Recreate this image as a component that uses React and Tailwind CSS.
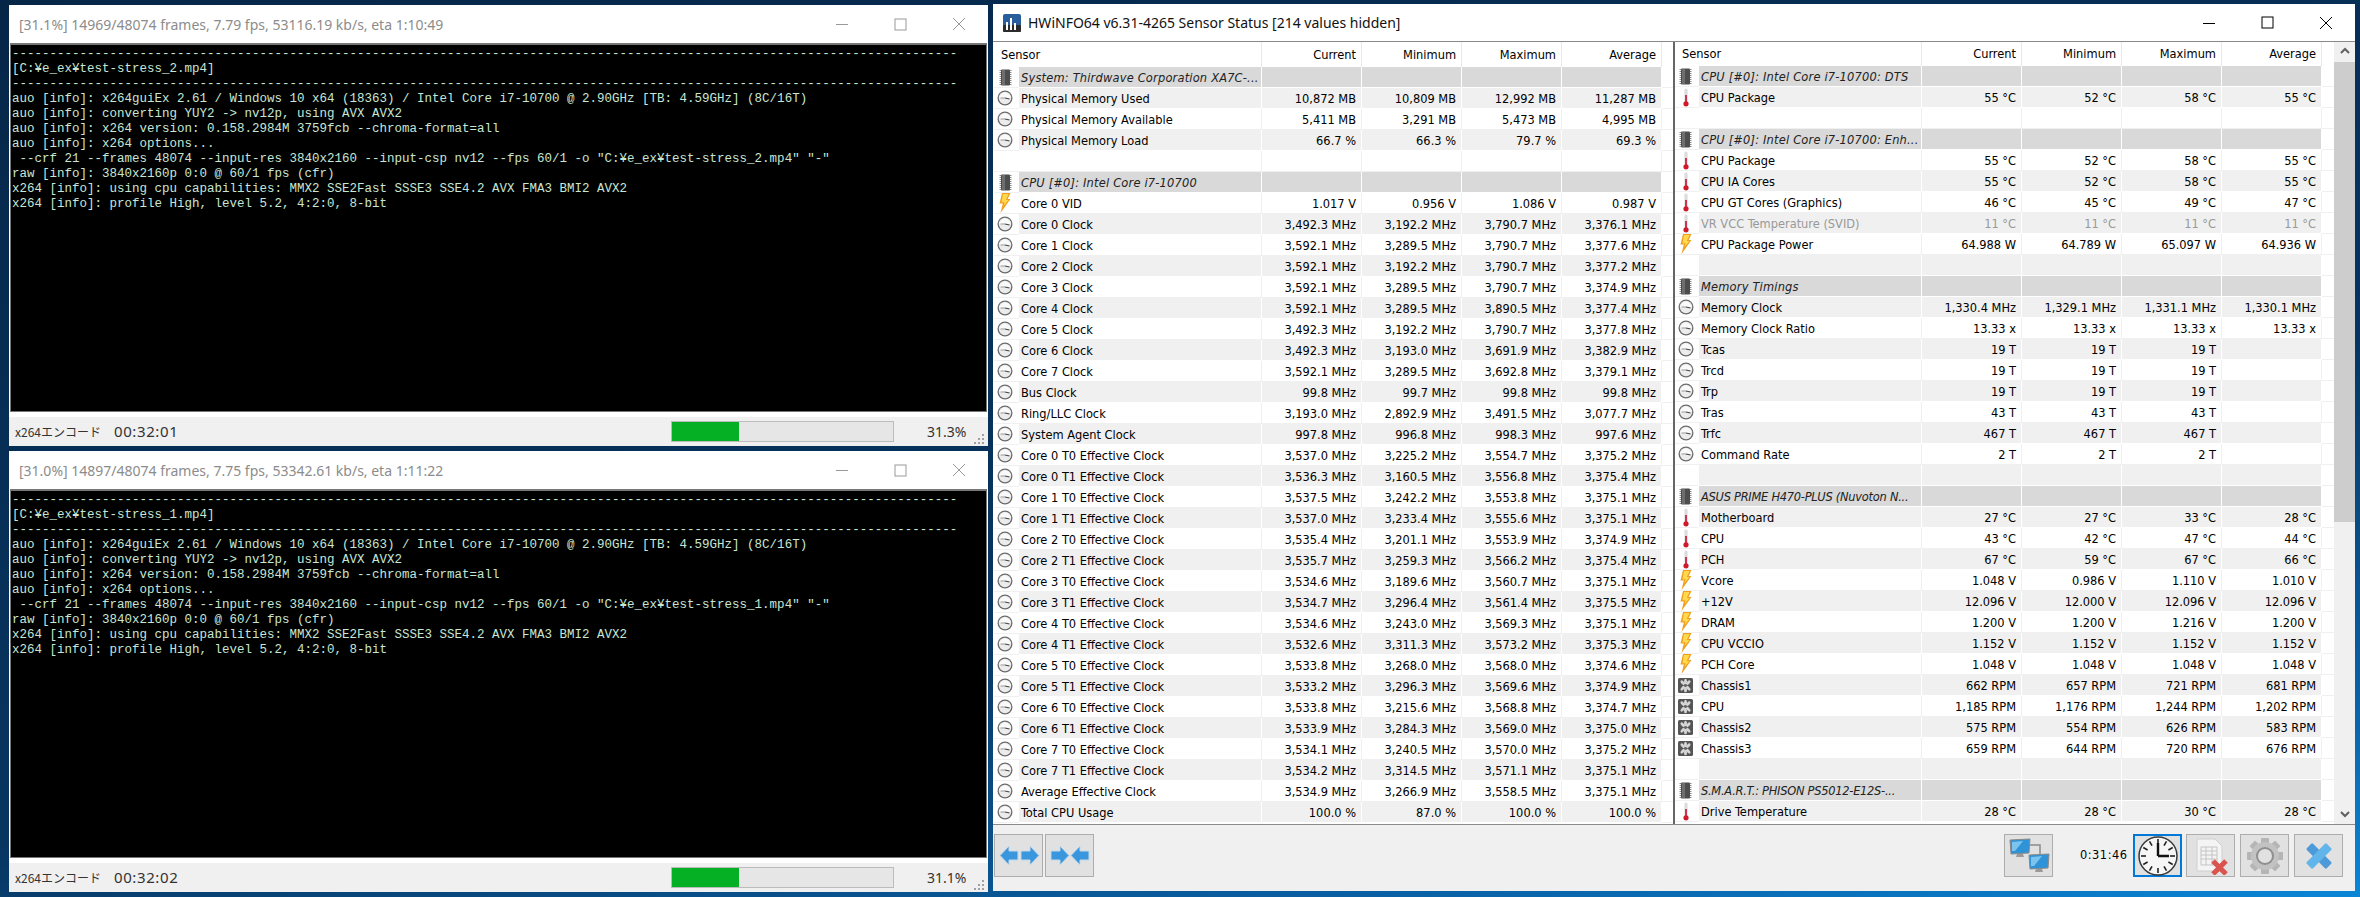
import React from "react";

const Chip = () => (
  <svg width="13" height="17" viewBox="0 0 13 17">
    <rect x="2" y="0.5" width="9" height="16" rx="1" fill="#4d4d4d" />
    <rect x="3" y="1" width="3" height="15" fill="#6e6e6e" />
    {[1, 3, 5, 7, 9, 11, 13, 15].map((y) => (
      <g key={y}>
        <rect x="0.5" y={y} width="1.5" height="1" fill="#8a8a8a" />
        <rect x="11" y={y} width="1.5" height="1" fill="#8a8a8a" />
      </g>
    ))}
  </svg>
);
const Gauge = () => (
  <svg width="16" height="16" viewBox="0 0 16 16">
    <circle cx="8" cy="8" r="7.5" fill="#6b6b6b" />
    <circle cx="8" cy="8" r="6.2" fill="#ececec" />
    <path d="M2.6 8 A5.4 5.4 0 0 1 13.4 8" fill="#fafafa" />
    <path d="M8 8 L12.5 9" stroke="#444" strokeWidth="1.2" />
    <path d="M3.5 8 L8 8" stroke="#999" strokeWidth="1" />
  </svg>
);
const Thermo = () => (
  <svg width="8" height="19" viewBox="0 0 8 19">
    <rect x="2.4" y="0.5" width="3.2" height="15" rx="1.5" fill="#dcdcdc" />
    <rect x="3.2" y="7" width="1.6" height="9" fill="#c8102e" />
    <circle cx="4" cy="15.8" r="2.6" fill="#cf1a2c" />
  </svg>
);
const Bolt = () => (
  <svg width="12" height="20" viewBox="0 0 12 20">
    <path d="M3 0 L11.5 0 L8.6 6 L11.5 6 L1.5 20 L3.8 10.5 L0.5 10.5 Z" fill="#f0a020" />
    <path d="M4 1 L9.5 1 L6.8 7 L9.6 7 L4.5 13 L5.6 9.2 L2.5 9.2 Z" fill="#ffd84d" />
  </svg>
);
const Fan = () => (
  <svg width="15" height="15" viewBox="0 0 15 15">
    <rect width="15" height="15" rx="1.5" fill="#555" />
    {[45, 135, 225, 315, 0, 180].map((a) => (
      <ellipse key={a} cx="7.5" cy="3.6" rx="1.5" ry="2.9" fill="#d6d6d6" transform={`rotate(${a} 7.5 7.5)`} />
    ))}
    <circle cx="7.5" cy="7.5" r="1.4" fill="#666" />
  </svg>
);

const icons = { g: Chip, c: Gauge, t: Thermo, b: Bolt, f: Fan };

const mhz = (a, b, c, d) => [a, b, c, d].map((v) => v + " MHz");

const leftRows = [
  ["g", "System: Thirdwave Corporation XA7C-..."],
  ["c", "Physical Memory Used", "10,872 MB", "10,809 MB", "12,992 MB", "11,287 MB"],
  ["c", "Physical Memory Available", "5,411 MB", "3,291 MB", "5,473 MB", "4,995 MB"],
  ["c", "Physical Memory Load", "66.7 %", "66.3 %", "79.7 %", "69.3 %"],
  [""],
  ["g", "CPU [#0]: Intel Core i7-10700"],
  ["b", "Core 0 VID", "1.017 V", "0.956 V", "1.086 V", "0.987 V"],
  ["c", "Core 0 Clock", ...mhz("3,492.3", "3,192.2", "3,790.7", "3,376.1")],
  ["c", "Core 1 Clock", ...mhz("3,592.1", "3,289.5", "3,790.7", "3,377.6")],
  ["c", "Core 2 Clock", ...mhz("3,592.1", "3,192.2", "3,790.7", "3,377.2")],
  ["c", "Core 3 Clock", ...mhz("3,592.1", "3,289.5", "3,790.7", "3,374.9")],
  ["c", "Core 4 Clock", ...mhz("3,592.1", "3,289.5", "3,890.5", "3,377.4")],
  ["c", "Core 5 Clock", ...mhz("3,492.3", "3,192.2", "3,790.7", "3,377.8")],
  ["c", "Core 6 Clock", ...mhz("3,492.3", "3,193.0", "3,691.9", "3,382.9")],
  ["c", "Core 7 Clock", ...mhz("3,592.1", "3,289.5", "3,692.8", "3,379.1")],
  ["c", "Bus Clock", ...mhz("99.8", "99.7", "99.8", "99.8")],
  ["c", "Ring/LLC Clock", ...mhz("3,193.0", "2,892.9", "3,491.5", "3,077.7")],
  ["c", "System Agent Clock", ...mhz("997.8", "996.8", "998.3", "997.6")],
  ["c", "Core 0 T0 Effective Clock", ...mhz("3,537.0", "3,225.2", "3,554.7", "3,375.2")],
  ["c", "Core 0 T1 Effective Clock", ...mhz("3,536.3", "3,160.5", "3,556.8", "3,375.4")],
  ["c", "Core 1 T0 Effective Clock", ...mhz("3,537.5", "3,242.2", "3,553.8", "3,375.1")],
  ["c", "Core 1 T1 Effective Clock", ...mhz("3,537.0", "3,233.4", "3,555.6", "3,375.1")],
  ["c", "Core 2 T0 Effective Clock", ...mhz("3,535.4", "3,201.1", "3,553.9", "3,374.9")],
  ["c", "Core 2 T1 Effective Clock", ...mhz("3,535.7", "3,259.3", "3,566.2", "3,375.4")],
  ["c", "Core 3 T0 Effective Clock", ...mhz("3,534.6", "3,189.6", "3,560.7", "3,375.1")],
  ["c", "Core 3 T1 Effective Clock", ...mhz("3,534.7", "3,296.4", "3,561.4", "3,375.5")],
  ["c", "Core 4 T0 Effective Clock", ...mhz("3,534.6", "3,243.0", "3,569.3", "3,375.1")],
  ["c", "Core 4 T1 Effective Clock", ...mhz("3,532.6", "3,311.3", "3,573.2", "3,375.3")],
  ["c", "Core 5 T0 Effective Clock", ...mhz("3,533.8", "3,268.0", "3,568.0", "3,374.6")],
  ["c", "Core 5 T1 Effective Clock", ...mhz("3,533.2", "3,296.3", "3,569.6", "3,374.9")],
  ["c", "Core 6 T0 Effective Clock", ...mhz("3,533.8", "3,215.6", "3,568.8", "3,374.7")],
  ["c", "Core 6 T1 Effective Clock", ...mhz("3,533.9", "3,284.3", "3,569.0", "3,375.0")],
  ["c", "Core 7 T0 Effective Clock", ...mhz("3,534.1", "3,240.5", "3,570.0", "3,375.2")],
  ["c", "Core 7 T1 Effective Clock", ...mhz("3,534.2", "3,314.5", "3,571.1", "3,375.1")],
  ["c", "Average Effective Clock", ...mhz("3,534.9", "3,266.9", "3,558.5", "3,375.1")],
  ["c", "Total CPU Usage", "100.0 %", "87.0 %", "100.0 %", "100.0 %"],
];

const rightRows = [
  ["g", "CPU [#0]: Intel Core i7-10700: DTS"],
  ["t", "CPU Package", "55 °C", "52 °C", "58 °C", "55 °C"],
  [""],
  ["g", "CPU [#0]: Intel Core i7-10700: Enh..."],
  ["t", "CPU Package", "55 °C", "52 °C", "58 °C", "55 °C"],
  ["t", "CPU IA Cores", "55 °C", "52 °C", "58 °C", "55 °C"],
  ["t", "CPU GT Cores (Graphics)", "46 °C", "45 °C", "49 °C", "47 °C"],
  ["t", "VR VCC Temperature (SVID)", "11 °C", "11 °C", "11 °C", "11 °C", true],
  ["b", "CPU Package Power", "64.988 W", "64.789 W", "65.097 W", "64.936 W"],
  [""],
  ["g", "Memory Timings"],
  ["c", "Memory Clock", "1,330.4 MHz", "1,329.1 MHz", "1,331.1 MHz", "1,330.1 MHz"],
  ["c", "Memory Clock Ratio", "13.33 x", "13.33 x", "13.33 x", "13.33 x"],
  ["c", "Tcas", "19 T", "19 T", "19 T", ""],
  ["c", "Trcd", "19 T", "19 T", "19 T", ""],
  ["c", "Trp", "19 T", "19 T", "19 T", ""],
  ["c", "Tras", "43 T", "43 T", "43 T", ""],
  ["c", "Trfc", "467 T", "467 T", "467 T", ""],
  ["c", "Command Rate", "2 T", "2 T", "2 T", ""],
  [""],
  ["g", "ASUS PRIME H470-PLUS (Nuvoton N..."],
  ["t", "Motherboard", "27 °C", "27 °C", "33 °C", "28 °C"],
  ["t", "CPU", "43 °C", "42 °C", "47 °C", "44 °C"],
  ["t", "PCH", "67 °C", "59 °C", "67 °C", "66 °C"],
  ["b", "Vcore", "1.048 V", "0.986 V", "1.110 V", "1.010 V"],
  ["b", "+12V", "12.096 V", "12.000 V", "12.096 V", "12.096 V"],
  ["b", "DRAM", "1.200 V", "1.200 V", "1.216 V", "1.200 V"],
  ["b", "CPU VCCIO", "1.152 V", "1.152 V", "1.152 V", "1.152 V"],
  ["b", "PCH Core", "1.048 V", "1.048 V", "1.048 V", "1.048 V"],
  ["f", "Chassis1", "662 RPM", "657 RPM", "721 RPM", "681 RPM"],
  ["f", "CPU", "1,185 RPM", "1,176 RPM", "1,244 RPM", "1,202 RPM"],
  ["f", "Chassis2", "575 RPM", "554 RPM", "626 RPM", "583 RPM"],
  ["f", "Chassis3", "659 RPM", "644 RPM", "720 RPM", "676 RPM"],
  [""],
  ["g", "S.M.A.R.T.: PHISON PS5012-E12S-..."],
  ["t", "Drive Temperature", "28 °C", "28 °C", "30 °C", "28 °C"],
];

function SensorTable({ rows, headerH, iconW, nameW, headW, className }) {
  const heads = ["Current", "Minimum", "Maximum", "Average"];
  return (
    <div className={"flex flex-col overflow-hidden " + className}>
      <div className={"flex shrink-0 " + headerH}>
        <div className={"border-r border-[#e8e8e8] pl-[7px] flex items-center " + headW}>Sensor</div>
        {heads.map((h) => (
          <div key={h} className="w-[100px] border-r border-[#e8e8e8] pr-[5px] flex items-center justify-end">{h}</div>
        ))}
      </div>
      {rows.map((r, i) => {
        const group = r[0] === "g";
        const caps = group && (r[1].startsWith("ASUS") || r[1].startsWith("S.M.A.R.T."));
        const alt = i % 2 === 1;
        const bg = group ? "bg-[#d9d9d9] border-white" : alt ? "bg-[#f0f0f0] border-white" : "bg-white border-[#f0f0f0]";
        const Ico = icons[r[0]];
        const tone = r[6] ? "text-[#999999]" : "text-black";
        const nameStyle = caps ? " italic text-[#222222] tracking-[-0.25px]" : group ? " italic text-[#222222] tracking-[0.2px]" : "";
        return (
          <div key={i} className={"flex h-[21px] shrink-0 leading-[21px] " + tone}>
            <div className={"flex items-center justify-center border-b border-[#f0f0f0] pr-[3px] " + iconW}>
              {Ico ? <Ico /> : null}
            </div>
            <div className={"border-r border-b pl-[2px] whitespace-nowrap overflow-hidden " + nameW + " " + bg + nameStyle}>
              {r[1]}
            </div>
            {[2, 3, 4, 5].map((k) => (
              <div key={k} className={"w-[100px] border-r border-b pr-[5px] text-right whitespace-nowrap " + bg}>{r[k] || ""}</div>
            ))}
            <div className="flex-1 border-b border-[#f0f0f0]" />
          </div>
        );
      })}
    </div>
  );
}

function WinButtons({ color }) {
  return (
    <div className="flex shrink-0" style={{ color }}>
      <div className="w-[59px] flex items-center justify-center">
        <svg width="14" height="12" viewBox="0 0 14 12"><path d="M1 6.5H13" stroke="currentColor" strokeWidth="1" /></svg>
      </div>
      <div className="w-[59px] flex items-center justify-center">
        <svg width="13" height="13" viewBox="0 0 13 13"><rect x="1" y="1" width="11" height="11" fill="none" stroke="currentColor" strokeWidth="1" /></svg>
      </div>
      <div className="w-[58px] flex items-center justify-center">
        <svg width="14" height="14" viewBox="0 0 14 14"><path d="M1 1L13 13M13 1L1 13" stroke="currentColor" strokeWidth="1" /></svg>
      </div>
    </div>
  );
}

function Grip() {
  return (
    <svg width="11" height="10" viewBox="0 0 11 10" className="shrink-0">
      <g fill="#a0a0a0">
        <rect x="8" y="0" width="2" height="2" />
        <rect x="4" y="4" width="2" height="2" />
        <rect x="8" y="4" width="2" height="2" />
        <rect x="0" y="8" width="2" height="2" />
        <rect x="4" y="8" width="2" height="2" />
        <rect x="8" y="8" width="2" height="2" />
      </g>
    </svg>
  );
}

function Console({ title, file, time, pct, className }) {
  const dash = "-".repeat(126);
  const lines = [
    dash,
    `[C:¥e_ex¥test-stress_${file}.mp4]`,
    dash,
    "auo [info]: x264guiEx 2.61 / Windows 10 x64 (18363) / Intel Core i7-10700 @ 2.90GHz [TB: 4.59GHz] (8C/16T)",
    "auo [info]: converting YUY2 -> nv12p, using AVX AVX2",
    "auo [info]: x264 version: 0.158.2984M 3759fcb --chroma-format=all",
    "auo [info]: x264 options...",
    ` --crf 21 --frames 48074 --input-res 3840x2160 --input-csp nv12 --fps 60/1 -o "C:¥e_ex¥test-stress_${file}.mp4" "-"`,
    "raw [info]: 3840x2160p 0:0 @ 60/1 fps (cfr)",
    "x264 [info]: using cpu capabilities: MMX2 SSE2Fast SSSE3 SSE4.2 AVX FMA3 BMI2 AVX2",
    "x264 [info]: profile High, level 5.2, 4:2:0, 8-bit",
  ];
  return (
    <div className={"w-[979px] h-[441px] bg-white flex flex-col " + className}>
      <div className="h-[38px] shrink-0 flex items-center pl-[10px]">
        <div className="flex-1 text-[14px] text-[#8c8c8c] font-['Noto_Sans'] whitespace-nowrap">{title}</div>
        <WinButtons color="#999999" />
      </div>
      <div className="h-[369px] shrink-0 mx-px border-t-2 border-x border-b border-[#777777] bg-black pl-px pt-[2px] overflow-hidden">
        <pre className="font-['Liberation_Mono'] text-[12.5px] leading-[15px] text-[#c8e6d4]">{lines.join("\n")}</pre>
      </div>
      <div className="h-[5px] shrink-0 bg-white" />
      <div className="flex-1 bg-[#f0f0f0] flex items-center pl-[6px] pr-[3px] text-[#333333]">
        <span className="font-['Noto_Sans_CJK_JP'] text-[12px] w-[84px] whitespace-nowrap">x264エンコード</span>
        <span className="ml-[15px] w-[64px] font-['Noto_Sans'] text-[15px] tracking-[0.6px] whitespace-nowrap">{time}</span>
        <div className="ml-[493px] w-[224px] h-[21px] border border-[#bcbcbc] bg-[#e6e6e6] flex">
          <div className="w-[67px] bg-[#06b025]" />
        </div>
        <span className="ml-[33px] w-[39px] font-['Noto_Sans'] text-[14px] whitespace-nowrap">{pct}</span>
        <div className="ml-[8px] self-end mb-[2px]"><Grip /></div>
      </div>
    </div>
  );
}

const ToolBtn = ({ children, active }) => (
  <div className={"w-[49px] h-[43px] shrink-0 flex items-center justify-center bg-[#e1e1e1] " + (active ? "border-2 border-[#0078d7]" : "border border-[#adadad]")}>
    {children}
  </div>
);

const BlockArrow = ({ dir, x }) => (
  <path
    transform={`translate(${x} 0)`}
    d={dir === "l" ? "M0 10.5 L9 1 L9 6 L18 6 L18 15 L9 15 L9 20 Z" : "M18 10.5 L9 1 L9 6 L0 6 L0 15 L9 15 L9 20 Z"}
    fill="#3a97dd"
    stroke="#c4d8e8"
    strokeWidth="1"
  />
);

const Monitor = ({ x, y }) => (
  <g transform={`translate(${x} ${y})`}>
    <path d="M1 1 L21 0 L20 14 L2 15 Z" fill="#2f93d8" stroke="#8a8a8a" strokeWidth="1" />
    <path d="M3 3 L14 2 L6 12 L3 12 Z" fill="#7cc4ee" />
    <path d="M8 15 L14 15 L15 18 L7 18 Z" fill="#9a9a9a" />
  </g>
);

function App() {
  return (
    <div className="w-[2360px] h-[897px] overflow-hidden flex items-start gap-[5px] pl-[9px] bg-[linear-gradient(168deg,#062648_0%,#073560_60%,#0a60a4_85%,#0a86d6_100%)]">
      <div className="flex flex-col gap-[5px] pt-[5px] shrink-0">
        <Console title="[31.1%] 14969/48074 frames, 7.79 fps, 53116.19 kb/s, eta 1:10:49" file="2" time="00:32:01" pct="31.3%" />
        <Console title="[31.0%] 14897/48074 frames, 7.75 fps, 53342.61 kb/s, eta 1:11:22" file="1" time="00:32:02" pct="31.1%" />
      </div>

      <div className="mt-[4px] w-[1362px] h-[887px] bg-white flex flex-col shrink-0">
        <div className="h-[37px] shrink-0 flex items-center pl-[10px]">
          <svg width="18" height="18" viewBox="0 0 18 18" className="shrink-0">
            <rect width="18" height="18" rx="2" fill="#2a5d9c" />
            <rect y="11" width="18" height="7" rx="1" fill="#2b2b2b" />
            <rect x="3" y="8" width="2" height="8" fill="#fff" />
            <rect x="7" y="4" width="2" height="12" fill="#fff" />
            <rect x="11" y="9" width="2" height="7" fill="#fff" />
          </svg>
          <div className="ml-[7px] flex-1 text-[14px] text-[#111111] font-['Noto_Sans'] whitespace-nowrap">HWiNFO64 v6.31-4265 Sensor Status [214 values hidden]</div>
          <WinButtons color="#000000" />
        </div>

        <div className="h-[784px] shrink-0 border-t border-b border-[#8a8a8a] flex font-['DejaVu_Sans'] [font-stretch:condensed] text-[12.7px] overflow-hidden">
          <SensorTable rows={leftRows} headerH="h-[25px]" iconW="w-[25px]" nameW="w-[243px]" headW="w-[268px]" className="w-[679px] ml-px" />
          <div className="w-[2px] bg-[#666666] shrink-0" />
          <SensorTable rows={rightRows} headerH="h-[24px]" iconW="w-[24px]" nameW="w-[223px]" headW="w-[247px]" className="w-[659px]" />
          <div className="w-[21px] shrink-0 bg-[#f0f0f0] flex flex-col items-center">
            <svg width="12" height="20" viewBox="0 0 12 20" className="shrink-0"><path d="M2 11L6 7L10 11" fill="none" stroke="#606060" strokeWidth="2" /></svg>
            <div className="w-full h-[460px] bg-[#cdcdcd]" />
            <div className="flex-1" />
            <svg width="12" height="20" viewBox="0 0 12 20" className="shrink-0"><path d="M2 8L6 12L10 8" fill="none" stroke="#606060" strokeWidth="2" /></svg>
          </div>
        </div>

        <div className="flex-1 bg-[#f0f0f0] flex items-start pt-[9px] pl-px pr-[12px]">
          <ToolBtn>
            <svg width="42" height="21" viewBox="0 0 42 21"><BlockArrow dir="l" x={2} /><BlockArrow dir="r" x={23} /></svg>
          </ToolBtn>
          <div className="ml-[2px]">
            <ToolBtn>
              <svg width="42" height="21" viewBox="0 0 42 21"><BlockArrow dir="r" x={2} /><BlockArrow dir="l" x={22} /></svg>
            </ToolBtn>
          </div>
          <div className="flex-1" />
          <ToolBtn>
            <svg width="42" height="38" viewBox="0 0 42 38">
              <path d="M22 8 H32 V18" fill="none" stroke="#8a8a8a" strokeWidth="1.5" />
              <Monitor x={1} y={2} />
              <Monitor x={20} y={17} />
            </svg>
          </ToolBtn>
          <span className="ml-[27px] w-[47px] mt-[12px] tracking-[0.5px] text-[12.7px] leading-[18px] text-black font-['DejaVu_Sans'] [font-stretch:condensed] whitespace-nowrap">0:31:46</span>
          <div className="ml-[6px]">
            <ToolBtn active>
              <svg width="40" height="40" viewBox="0 0 40 40">
                <circle cx="20" cy="20" r="19" fill="#f6f6f6" stroke="#3a3a3a" strokeWidth="1.5" />
                {Array.from({ length: 12 }).map((_, i) => (
                  <path key={i} d="M20 3 V8" stroke="#222" strokeWidth="1.6" transform={`rotate(${i * 30} 20 20)`} />
                ))}
                <path d="M20 20 V7 M20 20 H31" stroke="#111" strokeWidth="2.4" />
              </svg>
            </ToolBtn>
          </div>
          <div className="ml-[4px]">
            <ToolBtn>
              <svg width="40" height="38" viewBox="0 0 40 38">
                <path d="M6 2 H24 L31 9 V34 H6 Z" fill="#f4f4f4" stroke="#cfcfcf" />
                <path d="M10 10 H26 V28 H10 Z M10 14 H26 M10 18 H26 M10 22 H26 M15 10 V28 M21 10 V28" fill="none" stroke="#c4c4c4" />
                <path d="M22 24 L35 37 M35 24 L22 37" stroke="#d9534f" strokeWidth="5" />
              </svg>
            </ToolBtn>
          </div>
          <div className="ml-[5px]">
            <ToolBtn>
              <svg width="40" height="40" viewBox="0 0 40 40">
                {[0, 45, 90, 135, 180, 225, 270, 315].map((a) => (
                  <rect key={a} x="16" y="2" width="8" height="8" rx="1" fill="#b5b5b5" transform={`rotate(${a} 20 20)`} />
                ))}
                <circle cx="20" cy="20" r="14" fill="#c2c2c2" />
                <circle cx="20" cy="20" r="9" fill="#8f8f8f" />
                <circle cx="20" cy="20" r="7" fill="#e1e1e1" />
              </svg>
            </ToolBtn>
          </div>
          <div className="ml-[5px]">
            <ToolBtn>
              <svg width="30" height="30" viewBox="0 0 34 34">
                <rect x="12" y="1" width="10" height="32" rx="1.5" fill="#4d9ad8" transform="rotate(-45 17 17)" />
                <rect x="12" y="1" width="10" height="32" rx="1.5" fill="#62b5ea" transform="rotate(45 17 17)" />
              </svg>
            </ToolBtn>
          </div>
        </div>
      </div>
    </div>
  );
}

export default App;
